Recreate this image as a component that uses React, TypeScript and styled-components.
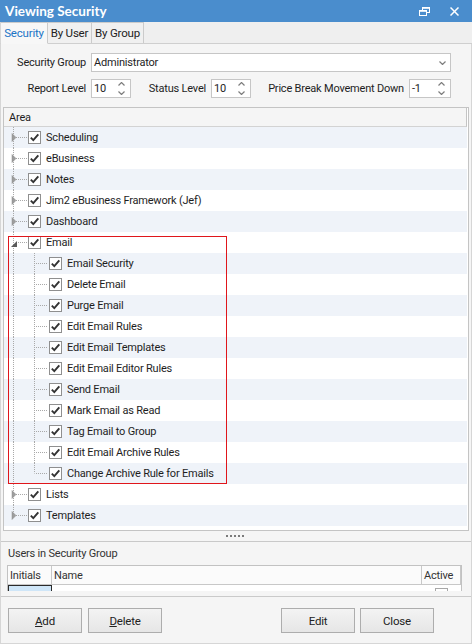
import React from 'react';
import styled, { createGlobalStyle } from 'styled-components';

const Global = createGlobalStyle`
  html, body { margin: 0; padding: 0; background: #ffffff; }
  * { box-sizing: border-box; }
  body {
    font-family: Roboto, "Noto Sans", sans-serif;
    font-size: 11px;
    letter-spacing: -0.2px;
    color: #1e1e1e;
  }
`;

const Window = styled.div`
  width: 472px;
  height: 644px;
  display: flex;
  flex-direction: column;
  background: #f5f5f5;
  overflow: hidden;
`;

const TitleBar = styled.div`
  height: 22px;
  flex: none;
  background: #4a8dcd;
  color: #ffffff;
  display: flex;
  align-items: center;
  padding: 0 13px 0 5px;
  font-family: Lato, "Noto Sans", sans-serif;
  font-weight: 700;
  font-size: 13.5px;
  letter-spacing: 0;
`;

const Title = styled.div`
  flex: 1;
`;

const TitleButtons = styled.div`
  display: flex;
  align-items: center;
  gap: 20px;
`;

const TabStrip = styled.div`
  height: 22px;
  flex: none;
  display: flex;
  align-items: flex-end;
  background: #efefef;
  border-bottom: 1px solid #cfcfcf;
  border-left: 1px solid #d6d6d6;
`;

const Tab = styled.div<{ $active?: boolean; $w: number }>`
  width: ${p => p.$w}px;
  height: ${p => (p.$active ? 22 : 21)}px;
  margin-bottom: ${p => (p.$active ? -1 : 0)}px;
  display: flex;
  align-items: center;
  justify-content: center;
  white-space: nowrap;
  font-size: 11.5px;
  background: ${p => (p.$active ? '#f7f7f7' : '#f0f0f0')};
  color: ${p => (p.$active ? '#1b74c6' : '#222222')};
  border: 1px solid #cbcbcb;
  border-left: ${p => (p.$active ? 'none' : '1px solid #cbcbcb')};
  border-bottom: ${p => (p.$active ? '1px solid #f7f7f7' : 'none')};
  margin-right: -1px;
`;

const Body = styled.div`
  flex: 1;
  display: flex;
  flex-direction: column;
  border-left: 1px solid #d6d6d6;
  border-right: 1px solid #d6d6d6;
  border-bottom: 1px solid #d6d6d6;
`;

const Form = styled.div`
  display: flex;
  flex-direction: column;
  gap: 7px;
  padding: 9px 0 0 8px;
`;

const FormRow = styled.div`
  display: flex;
  align-items: center;
  height: 19px;
`;

const FieldLabel = styled.div<{ $w: number }>`
  width: ${p => p.$w}px;
  text-align: right;
  white-space: nowrap;
  padding-right: 5px;
`;

const Combo = styled.div`
  width: 360px;
  height: 19px;
  background: #ffffff;
  border: 1px solid #c6c6c6;
  display: flex;
  align-items: center;
  padding: 0 4px 0 2px;
`;

const ComboText = styled.div`
  flex: 1;
`;

const Spin = styled.div<{ $w: number }>`
  width: ${p => p.$w}px;
  height: 19px;
  background: #ffffff;
  border: 1px solid #c6c6c6;
  display: flex;
  align-items: center;
`;

const SpinText = styled.div`
  flex: 1;
  padding-left: 2px;
`;

const SpinArrows = styled.div`
  width: 17px;
  height: 100%;
  display: flex;
  flex-direction: column;
  align-items: center;
  justify-content: center;
  gap: 5px;
`;

const Tree = styled.div`
  margin: 9px 2px 0 2px;
  height: 424px;
  flex: none;
  border: 1px solid #c4c4c4;
  background: #ffffff;
  display: flex;
  flex-direction: column;
  overflow: hidden;
`;

const TreeHeader = styled.div`
  height: 19px;
  flex: none;
  width: 463px;
  background: #f5f5f5;
  border-bottom: 1px solid #d3d3d3;
  border-right: 1px solid #c4c4c4;
  display: flex;
  align-items: center;
  padding-left: 5px;
`;

const Rows = styled.div`
  width: 463px;
  display: flex;
  flex-direction: column;
`;

const Row = styled.div<{ $shade: boolean }>`
  height: 21px;
  display: flex;
  align-items: center;
  background: ${p => (p.$shade ? '#eff3f9' : '#ffffff')};
`;

const Gutter = styled.svg`
  flex: none;
  display: block;
`;

const Check = styled.span`
  width: 13px;
  height: 13px;
  flex: none;
  border: 1px solid #8f8f8f;
  background: #ffffff;
  display: flex;
  align-items: center;
  justify-content: center;
  margin-right: 5px;
`;

const NodeText = styled.span`
  white-space: nowrap;
`;

const Highlight = styled.div`
  position: relative;
  display: flex;
  flex-direction: column;
  &::after {
    content: '';
    position: absolute;
    left: 4px;
    top: 4px;
    width: 217px;
    bottom: 0;
    border: 1px solid #e0161b;
    pointer-events: none;
  }
`;

const Splitter = styled.div`
  height: 11px;
  flex: none;
  border-bottom: 1px solid #c9c9c9;
  display: flex;
  align-items: center;
  justify-content: center;
  gap: 2px;
  padding-right: 3px;
`;

const Dot = styled.span`
  width: 2px;
  height: 2px;
  background: #7a7a7a;
`;

const GroupLabel = styled.div`
  height: 23px;
  flex: none;
  display: flex;
  align-items: center;
  padding-left: 7px;
  color: #333333;
`;

const GridWrap = styled.div`
  padding: 0 9px 5px 6px;
  border-bottom: 1px solid #cacaca;
`;

const Grid = styled.div`
  height: 26px;
  border: 1px solid #c2c2c2;
  border-bottom: none;
  background: #ffffff;
  display: flex;
  flex-direction: column;
  overflow: hidden;
`;

const GridHeader = styled.div`
  height: 19px;
  flex: none;
  display: flex;
  border-bottom: 1px solid #c8c8c8;
  background: #fbfbfb;
`;

const HeadCell = styled.div<{ $w?: number }>`
  width: ${p => (p.$w ? `${p.$w}px` : 'auto')};
  flex: ${p => (p.$w ? 'none' : '1')};
  border-right: 1px solid #c8c8c8;
  display: flex;
  align-items: center;
  padding-left: 2px;
  color: #333333;
`;

const GridRow = styled.div`
  flex: 1;
  display: flex;
`;

const DataCell = styled.div<{ $w?: number; $selected?: boolean }>`
  width: ${p => (p.$w ? `${p.$w}px` : 'auto')};
  flex: ${p => (p.$w ? 'none' : '1')};
  background: ${p => (p.$selected ? '#cfe6f8' : '#ffffff')};
  border: ${p => (p.$selected ? '1px solid #2a2a2a' : 'none')};
  border-bottom: none;
  display: flex;
  justify-content: center;
`;

const MiniCheck = styled.span`
  width: 13px;
  height: 6px;
  margin-top: 3px;
  border: 1px solid #a8a8a8;
  border-bottom: none;
`;

const ButtonBar = styled.div`
  display: flex;
  padding: 11px 0 0 7px;
`;

const ButtonGroup = styled.div<{ $push?: boolean }>`
  display: flex;
  gap: ${p => (p.$push ? 5 : 6)}px;
  margin-left: ${p => (p.$push ? 'auto' : '0')};
  margin-right: ${p => (p.$push ? '37px' : '0')};
`;

const Button = styled.button`
  width: 74px;
  height: 25px;
  border: 1px solid #adadad;
  background: linear-gradient(#f3f3f3, #e6e6e6);
  font-family: inherit;
  font-size: 11.5px;
  letter-spacing: -0.2px;
  color: #222222;
  padding: 0;
  u { text-decoration: underline; }
`;

const Chev: React.FC<{ dir: 'up' | 'down' }> = ({ dir }) => (
  <svg width="7" height="4" viewBox="0 0 7 4" style={{ display: 'block' }}>
    <polyline
      points={dir === 'down' ? '0.5,0.5 3.5,3.5 6.5,0.5' : '0.5,3.5 3.5,0.5 6.5,3.5'}
      fill="none"
      stroke="#7d7d7d"
      strokeWidth="1.2"
    />
  </svg>
);

const SpinBox: React.FC<{ w: number; value: string }> = ({ w, value }) => (
  <Spin $w={w}>
    <SpinText>{value}</SpinText>
    <SpinArrows>
      <Chev dir="up" />
      <Chev dir="down" />
    </SpinArrows>
  </Spin>
);

const CheckMark = () => (
  <svg width="11" height="11" viewBox="0 0 11 11">
    <polyline points="1.8,5.6 4.3,8.2 9.3,2.4" fill="none" stroke="#333333" strokeWidth="1.9" />
  </svg>
);

type NodeKind = 'root' | 'child';

interface NodeDef {
  text: string;
  kind: NodeKind;
  expander?: 'collapsed' | 'expanded';
  last?: boolean;
  lastChild?: boolean;
}

const DOT = '#a9a9a9';

const Connector: React.FC<{ node: NodeDef }> = ({ node }) => {
  const w = node.kind === 'root' ? 24 : 45;
  const rootEnd = node.last ? 10.5 : 21;
  return (
    <Gutter width={w} height={21} viewBox={`0 0 ${w} 21`}>
      <line x1="9.5" y1="0" x2="9.5" y2={rootEnd} stroke={DOT} strokeDasharray="1 1" />
      {node.kind === 'root' && (
        <line x1="12" y1="10.5" x2="23" y2="10.5" stroke={DOT} strokeDasharray="1 1" />
      )}
      {node.kind === 'child' && (
        <>
          <line
            x1="30.5"
            y1="0"
            x2="30.5"
            y2={node.lastChild ? 10.5 : 21}
            stroke={DOT}
            strokeDasharray="1 1"
          />
          <line x1="32" y1="10.5" x2="44" y2="10.5" stroke={DOT} strokeDasharray="1 1" />
        </>
      )}
      {node.expander === 'collapsed' && (
        <polygon points="8,6.5 12,10.5 8,14.5" fill="#9d9d9d" stroke="#8a8a8a" strokeWidth="0.5" />
      )}
      {node.expander === 'expanded' && <polygon points="13,9 13,15 7,15" fill="#5a5a5a" />}
    </Gutter>
  );
};

const TreeNode: React.FC<{ node: NodeDef; index: number }> = ({ node, index }) => (
  <Row $shade={index % 2 === 0}>
    <Connector node={node} />
    <Check>
      <CheckMark />
    </Check>
    <NodeText>{node.text}</NodeText>
  </Row>
);

const before: NodeDef[] = [
  { text: 'Scheduling', kind: 'root', expander: 'collapsed' },
  { text: 'eBusiness', kind: 'root', expander: 'collapsed' },
  { text: 'Notes', kind: 'root', expander: 'collapsed' },
  { text: 'Jim2 eBusiness Framework (Jef)', kind: 'root', expander: 'collapsed' },
  { text: 'Dashboard', kind: 'root', expander: 'collapsed' },
];

const childTexts = [
  'Email Security',
  'Delete Email',
  'Purge Email',
  'Edit Email Rules',
  'Edit Email Templates',
  'Edit Email Editor Rules',
  'Send Email',
  'Mark Email as Read',
  'Tag Email to Group',
  'Edit Email Archive Rules',
  'Change Archive Rule for Emails',
];

const emailGroup: NodeDef[] = [
  { text: 'Email', kind: 'root', expander: 'expanded' },
  ...childTexts.map((t, i) => ({
    text: t,
    kind: 'child' as NodeKind,
    lastChild: i === childTexts.length - 1,
  })),
];

const after: NodeDef[] = [
  { text: 'Lists', kind: 'root', expander: 'collapsed' },
  { text: 'Templates', kind: 'root', expander: 'collapsed', last: true },
];

const RestoreIcon = () => (
  <svg width="11" height="9" viewBox="0 0 11 9" style={{ display: 'block' }}>
    <rect x="3.5" y="0.5" width="7" height="5" fill="none" stroke="#fff" />
    <rect x="0.5" y="3.5" width="7" height="5" fill="#4a8dcd" stroke="#fff" />
    <line x1="0.5" y1="4" x2="7.5" y2="4" stroke="#fff" strokeWidth="1.6" />
    <line x1="3.5" y1="1" x2="10.5" y2="1" stroke="#fff" strokeWidth="1.6" />
  </svg>
);

const CloseIcon = () => (
  <svg width="9" height="9" viewBox="0 0 9 9" style={{ display: 'block' }}>
    <line x1="0.5" y1="0.5" x2="8.5" y2="8.5" stroke="#fff" strokeWidth="1.5" />
    <line x1="8.5" y1="0.5" x2="0.5" y2="8.5" stroke="#fff" strokeWidth="1.5" />
  </svg>
);

export default function App() {
  let idx = 0;
  return (
    <>
      <Global />
      <Window>
        <TitleBar>
          <Title>Viewing Security</Title>
          <TitleButtons>
            <RestoreIcon />
            <CloseIcon />
          </TitleButtons>
        </TitleBar>
        <TabStrip>
          <Tab $active $w={47}>Security</Tab>
          <Tab $w={45}>By User</Tab>
          <Tab $w={53}>By Group</Tab>
        </TabStrip>
        <Body>
          <Form>
            <FormRow>
              <FieldLabel $w={82}>Security Group</FieldLabel>
              <Combo>
                <ComboText>Administrator</ComboText>
                <Chev dir="down" />
              </Combo>
            </FormRow>
            <FormRow>
              <FieldLabel $w={82}>Report Level</FieldLabel>
              <SpinBox w={40} value="10" />
              <FieldLabel $w={80}>Status Level</FieldLabel>
              <SpinBox w={40} value="10" />
              <FieldLabel $w={158}>Price Break Movement Down</FieldLabel>
              <SpinBox w={42} value="-1" />
            </FormRow>
          </Form>
          <Tree>
            <TreeHeader>Area</TreeHeader>
            <Rows>
              {before.map(n => (
                <TreeNode key={n.text} node={n} index={idx++} />
              ))}
              <Highlight>
                {emailGroup.map(n => (
                  <TreeNode key={n.text} node={n} index={idx++} />
                ))}
              </Highlight>
              {after.map(n => (
                <TreeNode key={n.text} node={n} index={idx++} />
              ))}
            </Rows>
          </Tree>
          <Splitter>
            <Dot />
            <Dot />
            <Dot />
            <Dot />
            <Dot />
          </Splitter>
          <GroupLabel>Users in Security Group</GroupLabel>
          <GridWrap>
            <Grid>
              <GridHeader>
                <HeadCell $w={44}>Initials</HeadCell>
                <HeadCell>Name</HeadCell>
                <HeadCell $w={39}>Active</HeadCell>
              </GridHeader>
              <GridRow>
                <DataCell $w={44} $selected />
                <DataCell />
                <DataCell $w={39}>
                  <MiniCheck />
                </DataCell>
              </GridRow>
            </Grid>
          </GridWrap>
          <ButtonBar>
            <ButtonGroup>
              <Button>
                <u>A</u>dd
              </Button>
              <Button>
                <u>D</u>elete
              </Button>
            </ButtonGroup>
            <ButtonGroup $push>
              <Button>Edit</Button>
              <Button>Close</Button>
            </ButtonGroup>
          </ButtonBar>
        </Body>
      </Window>
    </>
  );
}
